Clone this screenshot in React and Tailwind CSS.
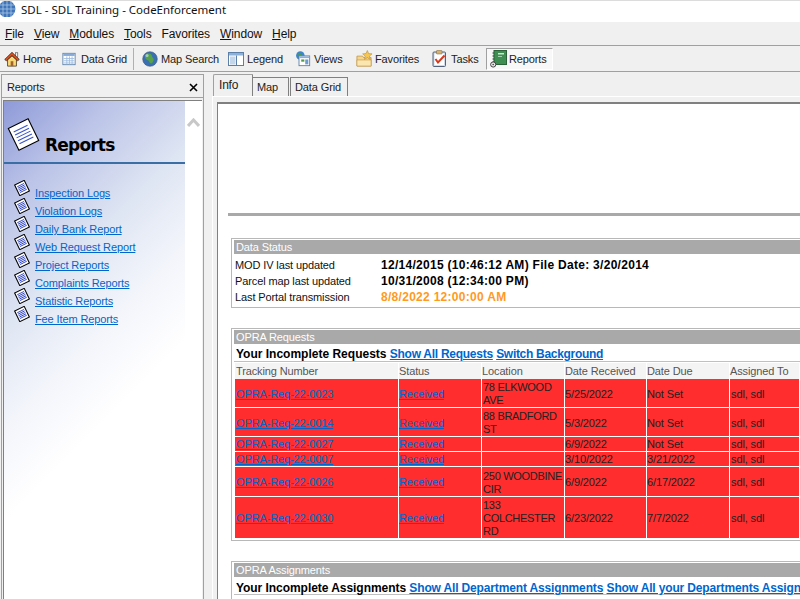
import React from "react";

const base = "font-['Liberation_Sans',Arial,sans-serif] text-[11px] tracking-[-0.12px]";
const boldText = "font-bold text-[12px] tracking-[0px]";

const AppGlobe = () => (
  <svg width="16" height="16" viewBox="0 0 16 16">
    <circle cx="7" cy="8" r="8.4" fill="#3f74b8" />
    <path d="M-1 4 H14 M-1 8 H15.4 M-1 12 H14 M3 0 V16 M7 0 V16 M11 0 V16" stroke="#a9c6e8" strokeWidth="0.8" />
  </svg>
);

const HomeIcon = () => (
  <svg width="16" height="16" viewBox="0 0 18 18">
    <rect x="13" y="2" width="2.5" height="5" fill="#f2f2f2" stroke="#444" strokeWidth="0.7" />
    <path d="M4 10 L9 5.5 L14 10 V17 H4 Z" fill="#f9d878" stroke="#4a3410" strokeWidth="0.9" />
    <path d="M9 1.5 L0.8 9.5 L2.6 11 L9 5 L15.4 11 L17.2 9.5 Z" fill="#e2501f" stroke="#3a1a08" strokeWidth="0.8" />
    <rect x="7.5" y="11.5" width="3" height="5.5" fill="#a5622a" />
  </svg>
);

const GridIcon = () => (
  <svg width="14" height="14" viewBox="0 0 16 16">
    <rect x="1" y="1.5" width="14" height="13" fill="#fff" stroke="#5b7fa8" />
    <rect x="1.5" y="2" width="13" height="2.5" fill="#88aad6" />
    <path d="M2 7.5 H14 M2 10 H14 M2 12.5 H14 M5.5 5 V14 M8.5 5 V14 M11.5 5 V14" stroke="#9dbbe0" strokeWidth="1" />
  </svg>
);

const GlobeIcon = () => (
  <svg width="16" height="16" viewBox="0 0 16 16">
    <circle cx="8" cy="8" r="7.3" fill="#3a70b2" stroke="#3d5878" strokeWidth="0.6" />
    <path d="M5 2.5 C8 2 10 3.5 10 5 C10 7 12.5 7 11.5 9.5 C10.5 12.5 8.5 13.5 7.5 11 C7 9 4 9 3.2 7 C2.7 5.5 3.8 3.5 5 2.5 Z" fill="#55a24a" />
    <circle cx="5" cy="4.5" r="1.6" fill="#c5dcf2" opacity="0.7" />
  </svg>
);

const LegendIcon = () => (
  <svg width="16" height="14" viewBox="0 0 16 14">
    <rect x="0.5" y="0.5" width="15" height="13" fill="#fff" stroke="#5b7fa8" />
    <rect x="1" y="1" width="14" height="2.5" fill="#8db0d8" />
    <rect x="2" y="4.5" width="5.5" height="8" fill="#c4d6ea" />
    <path d="M8.5 3.5 V13.5" stroke="#5b7fa8" />
  </svg>
);

const ViewsIcon = () => (
  <svg width="16" height="16" viewBox="0 0 18 18">
    <circle cx="6" cy="5" r="4.8" fill="#3c86c8" />
    <path d="M3 2.5 C5 1.5 7 3 7 5 C5 6 4 5 3 2.5Z" fill="#4f9a48" />
    <rect x="4.5" y="5.5" width="12" height="11" fill="#fff" stroke="#5b7fa8" />
    <rect x="5" y="6" width="11" height="2" fill="#8db0d8" />
    <rect x="7" y="9.5" width="3.5" height="2.5" fill="#4f9a48" />
    <rect x="11.5" y="9.5" width="3.5" height="5.5" fill="#6d9bd0" />
  </svg>
);

const FavoritesIcon = () => (
  <svg width="17" height="17" viewBox="0 0 18 18">
    <path d="M1 6.5 H7 L8 8 H16 V17 H1 Z" fill="#f6d68d" stroke="#c08f3a" strokeWidth="0.8" />
    <path d="M1 10.5 H16 V17 H1 Z" fill="#fbe6b0" stroke="#c08f3a" strokeWidth="0.6" />
    <path d="M12 0.5 L13.4 3.8 L17 4.1 L14.3 6.4 L15.1 10 L12 8.1 L8.9 10 L9.7 6.4 L7 4.1 L10.6 3.8 Z" fill="#f5c652" stroke="#bc8a2f" strokeWidth="0.6" />
  </svg>
);

const TasksIcon = () => (
  <svg width="15" height="17" viewBox="0 0 15 17">
    <rect x="1" y="2" width="12.5" height="14.5" rx="1" fill="#cfdbe8" stroke="#53627a" />
    <rect x="2.5" y="3.5" width="9.5" height="11.5" fill="#fff" />
    <rect x="4.5" y="0.5" width="5.5" height="3.5" rx="0.5" fill="#d8b070" stroke="#7d6435" strokeWidth="0.5" />
    <path d="M3.5 9 L6 12.5 L12.5 5.5" fill="none" stroke="#d8391c" strokeWidth="2" />
  </svg>
);

const ReportsIcon = () => (
  <svg width="17" height="18" viewBox="0 0 17 18">
    <rect x="4" y="0.5" width="12.5" height="14" fill="#3f8f52" stroke="#2b6238" />
    <path d="M4 3 H2.5 M4 6 H2.5 M4 9 H2.5 M4 12 H2.5" stroke="#333" />
    <rect x="8" y="3" width="6" height="1.5" fill="#c8e8cf" />
    <rect x="8" y="6" width="4" height="1" fill="#9fd3ab" />
    <circle cx="3.2" cy="14.5" r="2.6" fill="#e8e8e8" stroke="#444" />
    <circle cx="3.2" cy="14.5" r="0.8" fill="#444" />
  </svg>
);

const PageIcon = ({ size = 16 }) => (
  <svg width={size} height={size} viewBox="0 0 30 30" className="shrink-0">
    <g transform="rotate(-26 15 15)">
      <rect x="5" y="4" width="20" height="22" fill="#fff" stroke="#000" strokeWidth={size > 20 ? 1 : 2} />
      <path
        d="M8 9 H22 M8 12 H22 M8 15 H22 M8 18 H22 M8 21 H22"
        stroke={size > 20 ? "#3a55c8" : "#2a3fc0"}
        strokeWidth={size > 20 ? 1 : 1.6}
      />
    </g>
  </svg>
);

const ToolItem = ({ icon, label, className = "" }) => (
  <div className={`flex items-center h-[22px] shrink-0 ${className}`}>
    <div className="w-[19px] shrink-0 flex items-center">{icon}</div>
    <span className="text-[#222] pt-px">{label}</span>
  </div>
);

const MenuItem = ({ u, rest }) => (
  <span className="text-[12px] tracking-[-0.1px] text-[#111]">
    <span className="underline">{u}</span>
    {rest}
  </span>
);

const reportLinks = [
  "Inspection Logs",
  "Violation Logs",
  "Daily Bank Report",
  "Web Request Report",
  "Project Reports",
  "Complaints Reports",
  "Statistic Reports",
  "Fee Item Reports",
];

const rows = [
  { id: "OPRA-Req-22-0023", loc: "78 ELKWOOD AVE", recv: "5/25/2022", due: "Not Set", h: "h-[28px]", pt: "pt-[2px]" },
  { id: "OPRA-Req-22-0014", loc: "88 BRADFORD ST", recv: "5/3/2022", due: "Not Set", h: "h-[28px]", pt: "pt-[2px]" },
  { id: "OPRA-Req-22-0027", loc: "", recv: "6/9/2022", due: "Not Set", h: "h-[14px]", pt: "pt-px" },
  { id: "OPRA-Req-22-0007", loc: "", recv: "3/10/2022", due: "3/21/2022", h: "h-[14px]", pt: "pt-px" },
  { id: "OPRA-Req-22-0026", loc: "250 WOODBINE CIR", recv: "6/9/2022", due: "6/17/2022", h: "h-[29px]", pt: "pt-[2px]" },
  { id: "OPRA-Req-22-0030", loc: "133 COLCHESTER RD", recv: "6/23/2022", due: "7/7/2022", h: "h-[41px]", pt: "pt-[2px]" },
];

const headers = ["Tracking Number", "Status", "Location", "Date Received", "Date Due", "Assigned To"];

const gridCols = "grid grid-cols-[163px_82px_82px_81px_82px_69px] gap-x-px";

const SectionBar = ({ children }) => (
  <div className="h-[14px] bg-[#a9a9a9] text-white leading-[15px] pl-[2px]">{children}</div>
);

const Link = ({ children, className = "" }) => (
  <a className={`underline text-[#0066cc] ${className}`}>{children}</a>
);

const StatusRow = ({ label, value, orange }) => (
  <div className="flex h-[16px]">
    <div className="w-[147px] pl-px shrink-0 text-[#111]">{label}</div>
    <div className={`font-bold text-[12px] tracking-[0.29px] whitespace-nowrap ${orange ? "text-[#ff9a1f]" : "text-black"}`}>{value}</div>
  </div>
);

export default function App() {
  return (
    <div className={`w-[800px] h-[600px] overflow-hidden flex flex-col bg-[#f0f0f0] border-b border-[#d8d8d8] ${base}`}>
      {/* title bar */}
      <div className="h-[22px] shrink-0 bg-white border-t border-[#dcdcdc] flex items-start gap-[5px]">
        <AppGlobe />
        <span className="font-['Noto_Sans',sans-serif] text-[11.5px] tracking-normal leading-[18px] text-[#111]">
          SDL - SDL Training - CodeEnforcement
        </span>
      </div>

      {/* menu */}
      <div className="h-[24px] shrink-0 border-b border-[#a0a0a0] flex items-center gap-[10px] pl-[5px]">
        <MenuItem u="F" rest="ile" />
        <MenuItem u="V" rest="iew" />
        <MenuItem u="M" rest="odules" />
        <MenuItem u="T" rest="ools" />
        <span className="text-[12px] tracking-[-0.1px] text-[#111]">Favorites</span>
        <MenuItem u="W" rest="indow" />
        <MenuItem u="H" rest="elp" />
      </div>

      {/* toolbar */}
      <div className="h-[26px] shrink-0 border-b border-[#a0a0a0] flex items-center pl-[4px]">
        <ToolItem icon={<HomeIcon />} label="Home" className="w-[58px]" />
        <ToolItem icon={<GridIcon />} label="Data Grid" className="w-[71px]" />
        <div className="w-[9px] h-[22px] shrink-0 border-l border-[#b0b0b0]" />
        <ToolItem icon={<GlobeIcon />} label="Map Search" className="w-[86px]" />
        <ToolItem icon={<LegendIcon />} label="Legend" className="w-[67px]" />
        <ToolItem icon={<ViewsIcon />} label="Views" className="w-[61px]" />
        <ToolItem icon={<FavoritesIcon />} label="Favorites" className="w-[76px]" />
        <ToolItem icon={<TasksIcon />} label="Tasks" className="w-[54px]" />
        <ToolItem
          icon={<ReportsIcon />}
          label="Reports"
          className="w-[67px] pl-[3px] border border-[#a0a0a0] border-r-white border-b-white bg-[#f8f8f8]"
        />
      </div>

      {/* body */}
      <div className="flex-1 min-h-0 flex pt-[2px]">
        {/* left panel */}
        <div className="w-[203px] shrink-0 ml-px border border-[#a0a0a0] border-b-0 flex flex-col">
          <div className="h-[23px] shrink-0 flex items-center justify-between pt-[2px] pl-[5px] pr-[5px] border-b border-[#a0a0a0]">
            <span className="text-[#222]">Reports</span>
            <svg width="9" height="9" viewBox="0 0 9 9">
              <path d="M1 1 L8 8 M8 1 L1 8" stroke="#000" strokeWidth="1.6" />
            </svg>
          </div>
          <div className="flex-1 min-h-0 mx-px mt-[2px] border-l border-t border-[#808080] flex bg-white">
            <div className="w-[181px] shrink-0 bg-[linear-gradient(135deg,#8e9ad8_0%,#bcc4e8_16%,#dfe6f3_34%,#f3f5fb_48%,#ffffff_62%)]">
              <div className="h-[63px] border-b-2 border-[#3a6ea5] flex items-start pl-[3px] pt-[17px]">
                <PageIcon size={33} />
                <span className="ml-[5px] mt-[17px] text-[17px] leading-[20px] font-bold text-black font-['DejaVu_Sans',sans-serif] tracking-[-0.8px]">
                  Reports
                </span>
              </div>
              <div className="pt-[16px] pl-[10px] flex flex-col">
                {reportLinks.map((l) => (
                  <div key={l} className="h-[18px] flex items-start gap-[5px]">
                    <PageIcon size={16} />
                    <Link className="leading-[14px] mt-[6px]">{l}</Link>
                  </div>
                ))}
              </div>
            </div>
            <div className="flex-1 flex justify-center pt-[17px]">
              <svg width="13" height="10" viewBox="0 0 13 10">
                <path d="M1 8 L6.5 2 L12 8" fill="none" stroke="#c8c8c8" strokeWidth="3" />
              </svg>
            </div>
          </div>
        </div>

        {/* right side */}
        <div className="flex-1 min-w-0 ml-[8px] flex flex-col">
          <div className="h-[22px] shrink-0 flex items-end pl-px">
            <div className="h-[22px] w-[40px] pl-[5px] border border-[#a0a0a0] border-b-0 border-r-[#808080] rounded-tl-[2px] leading-[20px] text-[12px] tracking-[-0.2px] text-[#222]">Info</div>
            <div className="h-[19px] w-[36px] pl-[4px] border-r border-t border-[#808080] leading-[19px] text-[#222]">Map</div>
            <div className="h-[19px] w-[58px] ml-px pl-[4px] border border-b-0 border-[#808080] leading-[19px] text-[#222]">Data Grid</div>
          </div>
          <div className="flex-1 min-h-0 flex flex-col border-t border-l border-white pt-[5px] pl-[4px]">
            <div className="flex-1 min-h-0 overflow-hidden bg-white border-l border-t-2 border-[#808080] pl-[10px]">
              <div className="h-[112px] border-b-[3px] border-[#a9a9a9]" />

              <div className="mt-[22px] ml-[3px] w-[569px] h-[70px] border border-r-0 border-[#b8b8b8] pl-[2px] pt-[1px]">
                <SectionBar>Data Status</SectionBar>
                <div className="pt-[3px] leading-[16px]">
                  <StatusRow label="MOD IV last updated" value="12/14/2015 (10:46:12 AM) File Date: 3/20/2014" />
                  <StatusRow label="Parcel map last updated" value="10/31/2008 (12:34:00 PM)" />
                  <StatusRow label="Last Portal transmission" value="8/8/2022 12:00:00 AM" orange />
                </div>
              </div>

              <div className="mt-[20px] ml-[3px] w-[569px] h-[213px] border border-r-0 border-[#b8b8b8] pl-[2px] pt-[1px]">
                <SectionBar>OPRA Requests</SectionBar>
                <div className={`h-[18px] border-b border-[#c0c0c0] leading-[21px] pl-[2px] whitespace-nowrap ${boldText}`}>
                  Your Incomplete Requests <Link className="tracking-[-0.27px]">Show All Requests</Link>{" "}
                  <Link className="tracking-[-0.3px]">Switch Background</Link>
                </div>
                <div className={`${gridCols} mt-px ml-px`}>
                  {headers.map((h, i) => (
                    <div key={h} className={`h-[16px] bg-[#f4f4f4] leading-[16px] text-[#555] ${i === 0 ? "pl-px" : ""}`}>{h}</div>
                  ))}
                </div>
                <div className="flex flex-col gap-y-px ml-px">
                  {rows.map((r) => (
                    <div key={r.id} className={`${gridCols} ${r.h} leading-[13px] text-[#222]`}>
                      <div className={`bg-[#ff2d2d] flex items-center pl-px ${r.pt}`}><Link>{r.id}</Link></div>
                      <div className={`bg-[#ff2d2d] flex items-center ${r.pt}`}><Link>Received</Link></div>
                      <div className={`bg-[#ff2d2d] flex items-center pl-px tracking-[-0.3px] ${r.pt}`}>{r.loc}</div>
                      <div className={`bg-[#ff2d2d] flex items-center ${r.pt}`}>{r.recv}</div>
                      <div className={`bg-[#ff2d2d] flex items-center ${r.pt}`}>{r.due}</div>
                      <div className={`bg-[#ff2d2d] flex items-center pl-px ${r.pt}`}>sdl, sdl</div>
                    </div>
                  ))}
                </div>
              </div>

              <div className="mt-[20px] ml-[3px] w-[569px] border border-r-0 border-[#b8b8b8] pl-[2px] pt-[1px] whitespace-nowrap overflow-hidden">
                <SectionBar>OPRA Assignments</SectionBar>
                <div className={`h-[18px] border-b border-[#c0c0c0] leading-[23px] pl-[2px] ${boldText}`}>
                  <span className="tracking-[-0.05px]">Your Incomplete Assignments</span>{" "}
                  <Link className="tracking-[-0.15px]">Show All Department Assignments</Link>{" "}
                  <Link className="tracking-[-0.15px]">Show All your Departments Assignments</Link>
                </div>
                <div className="h-[10px]" />
              </div>
            </div>
          </div>
        </div>
      </div>
    </div>
  );
}
